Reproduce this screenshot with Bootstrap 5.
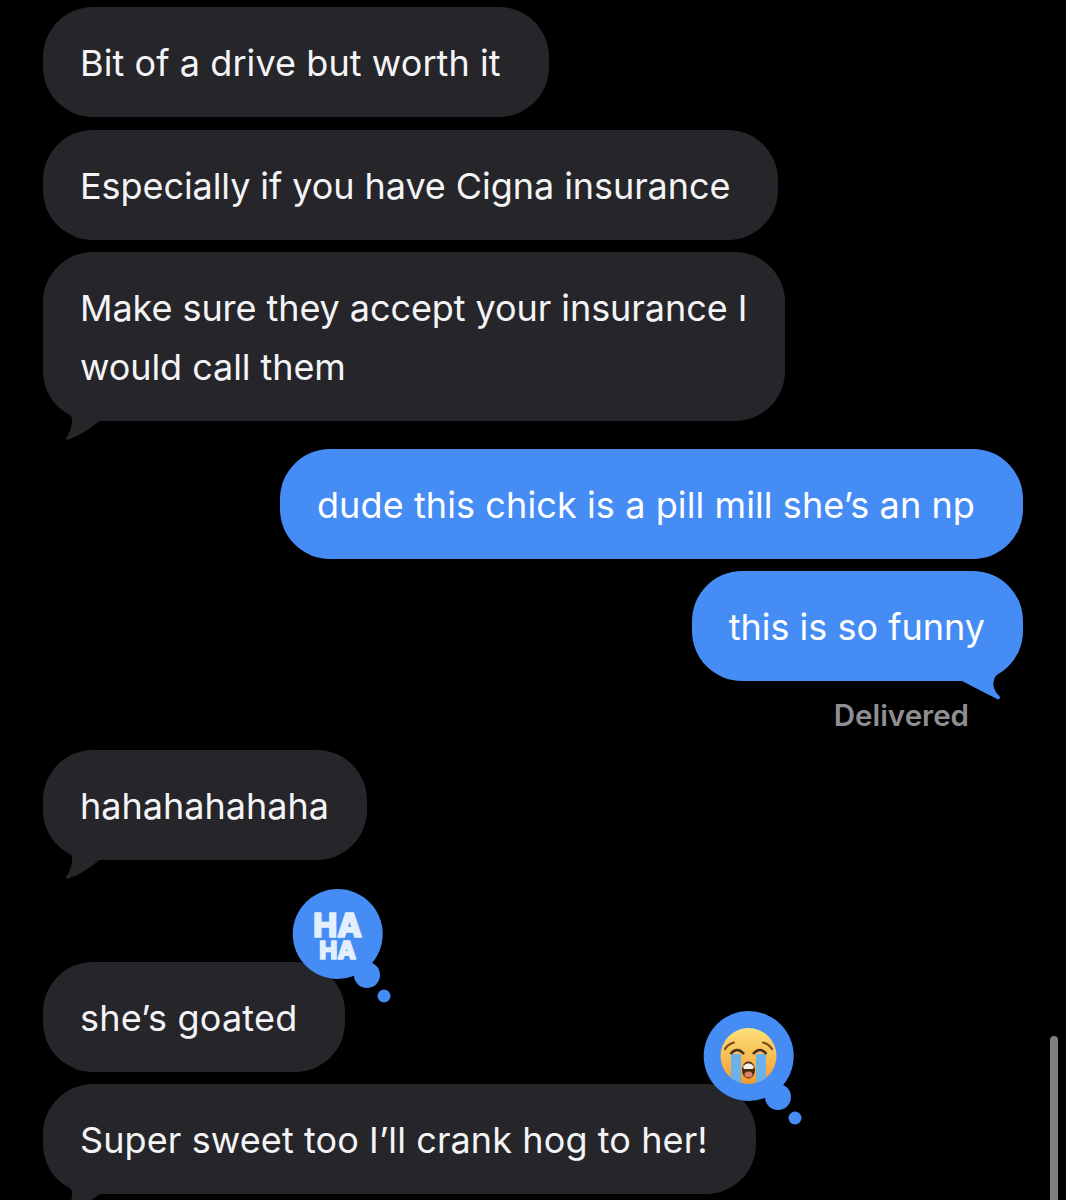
<!DOCTYPE html>
<html lang="en">
<head>
  <meta charset="UTF-8">
  <meta name="viewport" content="width=device-width, initial-scale=1.0">
  <title>Messages</title>
  <link rel="stylesheet" href="https://cdn.jsdelivr.net/npm/bootstrap@5.3.0/dist/css/bootstrap.min.css">
  <style>
    body {
      background: #000;
      height: 1200px;
      overflow: hidden;
      font-family: "Inter", "Liberation Sans", sans-serif;
    }

    .thread {
      padding: 7px 43px 0;
      height: 1200px;
      overflow: hidden;
      position: relative;
    }

    .bubble {
      position: relative;
      padding: 27px 38px 24.5px 37px;
      border-radius: 50px;
      font-size: 36px;
      line-height: 58.5px;
      color: #f4f4f6;
      white-space: nowrap;
      background: #26262a;
    }

    .bubble-out { background: #458df5; color: #fff; }
    .pad-wide { padding-right: 48px; }

    /* small tracking nudges so each line ends where the reference does */
    .track-tight { letter-spacing: -.07px; }
    .track-a { letter-spacing: .08px; }
    .track-b { letter-spacing: .1px; }
    .track-c { letter-spacing: .22px; }

    .gap-s { margin-top: 12.5px; }
    .gap-t { margin-top: 12px; }
    .gap-l { margin-top: 28px; }
    .gap-status { margin-top: 18px; }
    .gap-reaction { margin-top: 102px; }

    .tail { position: absolute; display: block; }
    .tail-in { left: 0; bottom: -20px; width: 60px; height: 46px; fill: #26262a; }
    .tail-out { right: 0; bottom: -19px; width: 66px; height: 46px; fill: #458df5; }

    .status {
      margin: 17px 54px 0 0;
      font-size: 29.5px;
      line-height: 34px;
      font-weight: 600;
      color: #8e8e93;
    }

    .reaction {
      position: absolute;
      right: -47px;
      top: -74px;
      width: 102px;
      height: 116px;
      fill: #458df5;
    }

    .haha {
      font-family: "Inter", "Liberation Sans", sans-serif;
      font-weight: 800;
      fill: #e3effd;
      stroke: #e3effd;
      stroke-width: 1.6px;
      stroke-linejoin: round;
      text-anchor: middle;
    }

    .scroller {
      position: absolute;
      left: 1050px;
      top: 1036px;
      width: 8px;
      height: 170px;
      border-radius: 4px;
      background: #808080;
    }
  </style>
</head>
<body>
<div class="thread d-flex flex-column align-items-start">
  <div class="bubble pad-wide track-a">Bit of a drive but worth it</div>
  <div class="bubble pad-wide track-tight gap-s">Especially if you have Cigna insurance</div>
  <div class="bubble track-tight gap-s">Make sure they accept your insurance I<br>would call them
    <svg class="tail tail-in" viewBox="0 0 60 46"><path d="M14 8C20 14 31 18 29 28C28 35 25 40 23 43C22 45 25 45 29 43C38 40 47 33 57 26L60 8Z"/></svg>
  </div>

  <div class="bubble bubble-out pad-wide track-b gap-l align-self-end">dude this chick is a pill mill she&rsquo;s an np</div>
  <div class="bubble bubble-out gap-t align-self-end">this is so funny
    <svg class="tail tail-out" viewBox="0 0 66 46"><path d="M3 26L40 45Q44 46 42.5 42C38 38 35 32 37 26C39 19 46 17 52 11C55 8 57 5 58.5 0L3 0Z"/></svg>
  </div>
  <div class="status align-self-end">Delivered</div>

  <div class="bubble gap-status">hahahahahaha
    <svg class="tail tail-in" viewBox="0 0 60 46"><path d="M14 8C20 14 31 18 29 28C28 35 25 40 23 43C22 45 25 45 29 43C38 40 47 33 57 26L60 8Z"/></svg>
  </div>

  <div class="bubble pad-wide track-c gap-reaction">she&rsquo;s goated
    <svg class="reaction" viewBox="0 0 102 116">
      <circle cx="47.7" cy="46" r="45"/>
      <circle cx="77" cy="87" r="13"/>
      <circle cx="94" cy="108" r="6.5"/>
      <text class="haha" font-size="32"><tspan x="47.7" y="49">HA</tspan><tspan x="47.7" y="71" font-size="24">HA</tspan></text>
    </svg>
  </div>
  <div class="bubble pad-wide track-b gap-s">Super sweet too I&rsquo;ll crank hog to her!
    <svg class="tail tail-in" viewBox="0 0 60 46"><path d="M14 8C20 14 31 18 29 28C28 35 25 40 23 43C22 45 25 45 29 43C38 40 47 33 57 26L60 8Z"/></svg>
    <svg class="reaction" viewBox="0 0 102 116">
      <defs>
        <linearGradient id="faceFill" x1="0" y1="0" x2="0" y2="1">
          <stop offset="0" stop-color="#fde27a"/>
          <stop offset="1" stop-color="#f29a2e"/>
        </linearGradient>
        <clipPath id="faceClip"><circle cx="47.5" cy="46" r="28"/></clipPath>
      </defs>
      <circle cx="47.7" cy="46" r="45"/>
      <circle cx="77" cy="87" r="13"/>
      <circle cx="94" cy="108" r="6.5"/>
      <circle cx="47.5" cy="46" r="28" fill="url(#faceFill)"/>
      <g clip-path="url(#faceClip)">
        <path d="M30 44H40V76H30Z" fill="#6cb2ea"/>
        <path d="M55 44H65V76H55Z" fill="#6cb2ea"/>
      </g>
      <path d="M24 39Q27 34 33 32.5" fill="none" stroke="#7a4a20" stroke-width="2.2" stroke-linecap="round"/>
      <path d="M71 39Q68 34 62 32.5" fill="none" stroke="#7a4a20" stroke-width="2.2" stroke-linecap="round"/>
      <path d="M29.5 44Q36 36 43 44" fill="none" stroke="#4a3020" stroke-width="2.6"/>
      <path d="M52 44Q59 36 65.5 44" fill="none" stroke="#4a3020" stroke-width="2.6"/>
      <ellipse cx="47.5" cy="60" rx="6.5" ry="8.5" fill="#4e2812"/>
      <path d="M42 56.5Q47.5 50 53 56.5L52 59H43Z" fill="#f4f1ea"/>
      <ellipse cx="47.5" cy="64.5" rx="4" ry="3" fill="#d9806a"/>
    </svg>
  </div>

  <div class="scroller"></div>
</div>
<script src="https://cdn.jsdelivr.net/npm/bootstrap@5.3.0/dist/js/bootstrap.bundle.min.js"></script>
</body>
</html>
